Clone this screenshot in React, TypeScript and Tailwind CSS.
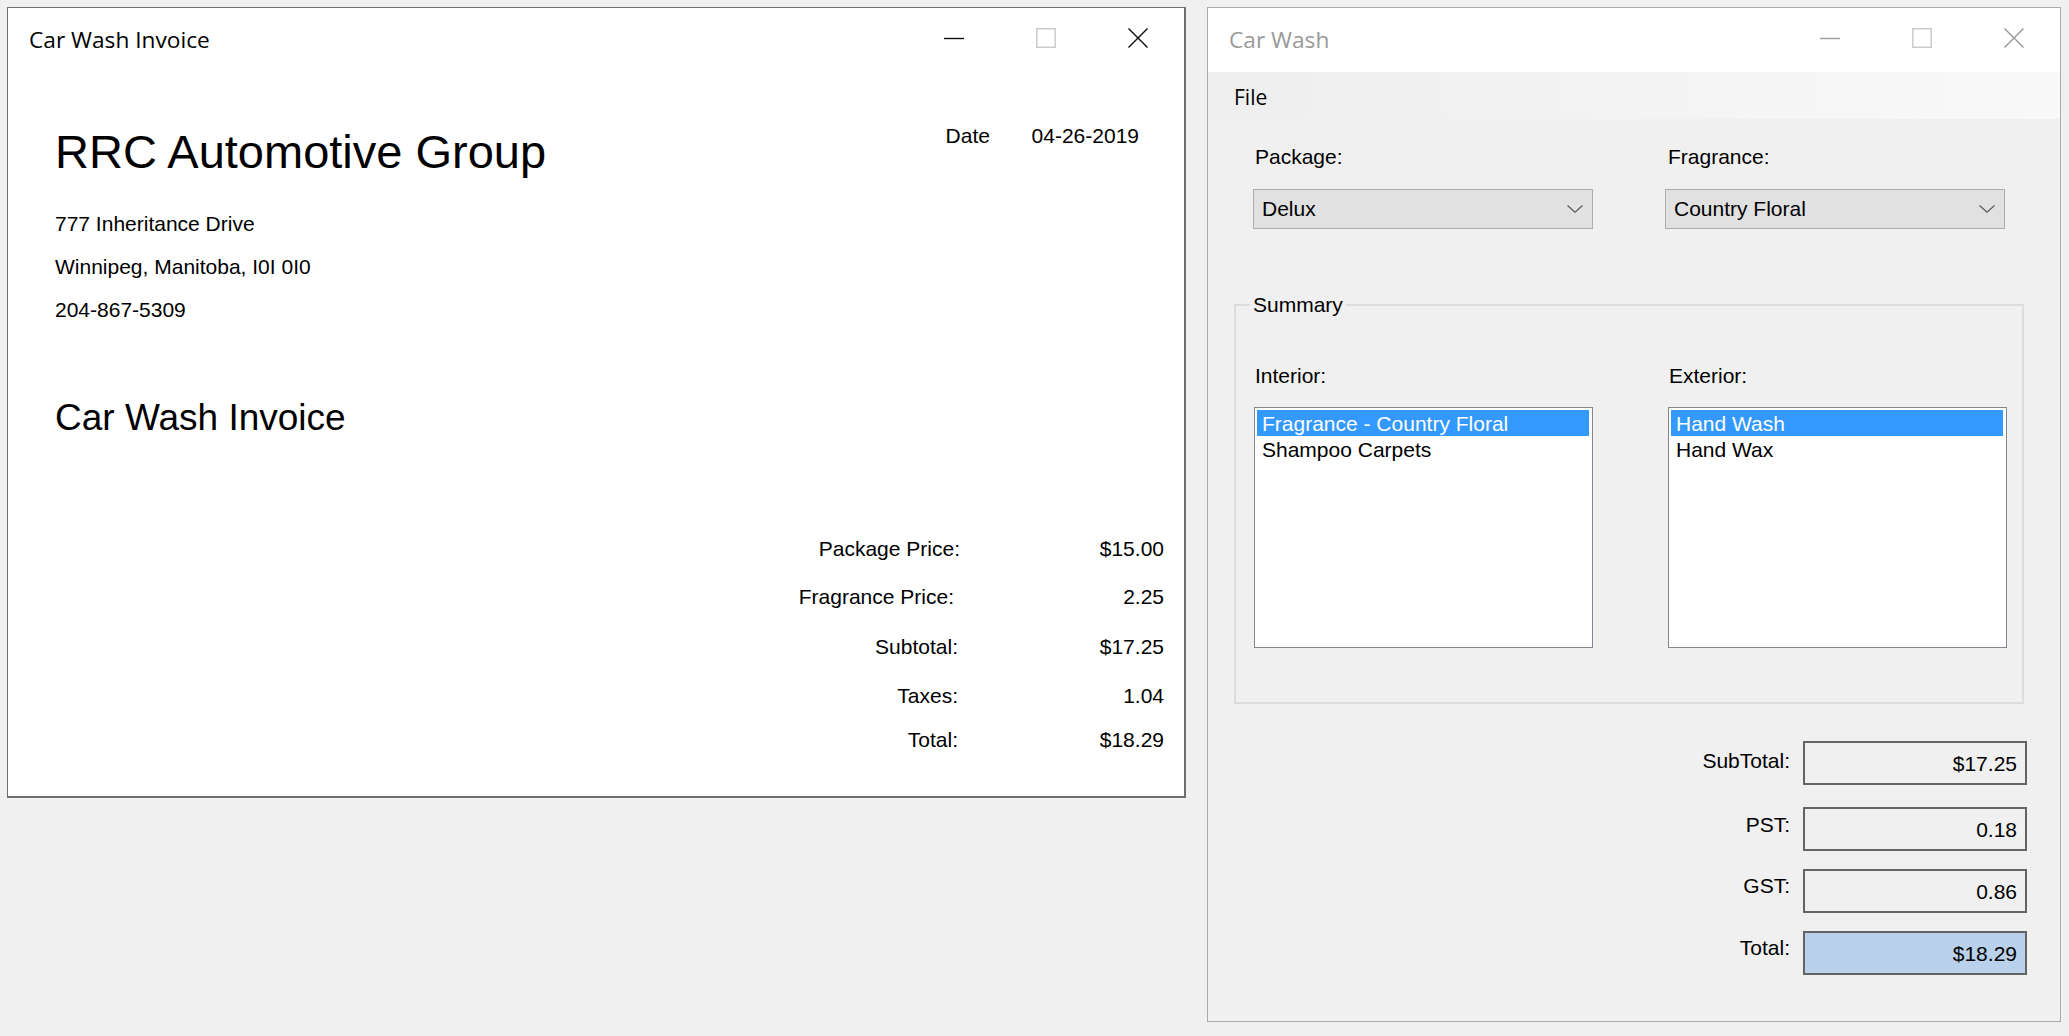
import React from "react";

function CaptionButtons({ active }: { active: boolean }) {
  const c = active ? "#111111" : "#9a9a9a";
  return (
    <div className="flex h-full">
      <div className="w-[92px] flex justify-center pt-[20px]">
        <svg width="20" height="20" viewBox="0 0 20 20">
          <line x1="0" y1="10.5" x2="20" y2="10.5" stroke={c} strokeWidth="1.4" />
        </svg>
      </div>
      <div className="w-[92px] flex justify-center pt-[20px]">
        <svg width="20" height="20" viewBox="0 0 20 20">
          <rect x="0.75" y="0.75" width="18.5" height="18.5" fill="none" stroke="#cccccc" strokeWidth="1.5" />
        </svg>
      </div>
      <div className="w-[92px] flex justify-center pt-[20px]">
        <svg width="20" height="20" viewBox="0 0 20 20">
          <line x1="0.5" y1="0.5" x2="19.5" y2="19.5" stroke={c} strokeWidth="1.4" />
          <line x1="19.5" y1="0.5" x2="0.5" y2="19.5" stroke={c} strokeWidth="1.4" />
        </svg>
      </div>
    </div>
  );
}

function TitleBar({ title, active }: { title: string; active: boolean }) {
  return (
    <div className="h-[64px] bg-white flex justify-between shrink-0">
      <div
        className={
          "pl-[21px] pt-[17px] text-[22.7px] leading-[30px] font-['Open_Sans',sans-serif] " +
          (active ? "text-black" : "text-[#999999]")
        }
      >
        {title}
      </div>
      <CaptionButtons active={active} />
    </div>
  );
}

function Chevron() {
  return (
    <svg width="16" height="8" viewBox="0 0 16 8">
      <path d="M0.5 0.5 L8 7.2 L15.5 0.5" fill="none" stroke="#5a5a5a" strokeWidth="1.2" />
    </svg>
  );
}

function Combo({ value }: { value: string }) {
  return (
    <div className="w-[340px] h-[40px] border border-[#adadad] bg-[#e1e1e1] flex items-center justify-between pl-[8px] pr-[9px]">
      <span className="leading-[26px]">{value}</span>
      <Chevron />
    </div>
  );
}

function ListBox({ items }: { items: string[] }) {
  return (
    <div className="w-[339px] h-[241px] border border-[#828790] bg-white pt-[2px] pl-[2px] pr-[3px]">
      {items.map((it, i) => (
        <div
          key={it}
          className={
            "h-[25px] leading-[27px] pl-[5px] whitespace-nowrap " +
            (i === 0 ? "bg-[#3399ff] text-white h-[26px]" : "text-black")
          }
        >
          {it}
        </div>
      ))}
    </div>
  );
}

const priceRows = [
  { label: "Package Price:", value: "$15.00", h: "h-[48px]", lm: "mr-[-2px]" },
  { label: "Fragrance Price:", value: "2.25", h: "h-[50px]", lm: "mr-[4px]" },
  { label: "Subtotal:", value: "$17.25", h: "h-[49px]", lm: "mr-0" },
  { label: "Taxes:", value: "1.04", h: "h-[44px]", lm: "mr-0" },
  { label: "Total:", value: "$18.29", h: "h-[26px]", lm: "mr-0" },
];

const totals = [
  { label: "SubTotal:", value: "$17.25", mt: "mt-0", lp: "pt-[7px]", bg: "bg-[#f0f0f0]" },
  { label: "PST:", value: "0.18", mt: "mt-[22px]", lp: "pt-[5px]", bg: "bg-[#f0f0f0]" },
  { label: "GST:", value: "0.86", mt: "mt-[18px]", lp: "pt-[4px]", bg: "bg-[#f0f0f0]" },
  { label: "Total:", value: "$18.29", mt: "mt-[18px]", lp: "pt-[4px]", bg: "bg-[#b9d1ea]" },
];

export default function App() {
  return (
    <div className="w-[2069px] h-[1036px] bg-[#f0f0f0] overflow-hidden flex items-start gap-[21px] pl-[7px] pt-[7px] font-['Liberation_Sans',Arial,sans-serif] text-black">
      {/* Invoice window */}
      <div className="w-[1179px] h-[791px] bg-white border-l border-t border-r-2 border-b-2 border-[#6f6f6f] flex flex-col shrink-0">
        <TitleBar title="Car Wash Invoice" active={true} />
        <div className="flex flex-col pl-[47px]">
          <div className="mt-[51px] flex justify-between items-start pr-[45px]">
            <div className="text-[47px] leading-[58px]">RRC Automotive Group</div>
            <div className="flex text-[21px] leading-[26px]">
              <span className="w-[86px]">Date</span>
              <span>04-26-2019</span>
            </div>
          </div>
          <div className="mt-[21px] text-[21px] leading-[43px]">
            <div>777 Inheritance Drive</div>
            <div>Winnipeg, Manitoba, I0I 0I0</div>
            <div>204-867-5309</div>
          </div>
          <div className="mt-[65px] text-[37px] leading-[44px]">Car Wash Invoice</div>
          <div className="mt-[96px] flex flex-col text-[21px] leading-[26px] pr-[20px]">
            {priceRows.map((r) => (
              <div key={r.label} className={"flex justify-end items-start " + r.h}>
                <span className={"text-right " + r.lm}>{r.label}</span>
                <span className="w-[206px] text-right">{r.value}</span>
              </div>
            ))}
          </div>
        </div>
      </div>

      {/* Car Wash form window */}
      <div className="w-[854px] h-[1015px] bg-[#f0f0f0] border border-[#aaaaaa] flex flex-col shrink-0">
        <TitleBar title="Car Wash" active={false} />
        <div className="h-[47px] shrink-0 bg-gradient-to-r from-[#eeeeee] to-[#f9f9f9] pl-[26px] pt-[12px] text-[21px] leading-[26px] font-['Open_Sans',sans-serif]">
          File
        </div>
        <div className="flex flex-col text-[21px] leading-[26px]">
          <div className="mt-[25px] flex pl-[45px] gap-[72px]">
            <div className="flex flex-col">
              <span className="ml-[2px]">Package:</span>
              <div className="mt-[19px]">
                <Combo value="Delux" />
              </div>
            </div>
            <div className="flex flex-col">
              <span className="ml-[3px]">Fragrance:</span>
              <div className="mt-[19px]">
                <Combo value="Country Floral" />
              </div>
            </div>
          </div>

          <div className="relative mt-[75px] ml-[26px] w-[790px] h-[400px] border-2 border-[#dcdcdc] pt-[57px] pl-[18px]">
            <span className="absolute left-[14px] top-[-14px] bg-[#f0f0f0] px-[3px]">Summary</span>
            <div className="flex gap-[75px]">
              <div className="flex flex-col">
                <span className="ml-[1px]">Interior:</span>
                <div className="mt-[18px]">
                  <ListBox items={["Fragrance - Country Floral", "Shampoo Carpets"]} />
                </div>
              </div>
              <div className="flex flex-col">
                <span className="ml-[1px]">Exterior:</span>
                <div className="mt-[18px]">
                  <ListBox items={["Hand Wash", "Hand Wax"]} />
                </div>
              </div>
            </div>
          </div>

          <div className="mt-[37px] flex flex-col items-end pr-[33px]">
            {totals.map((t) => (
              <div key={t.label} className={"flex items-start gap-[13px] " + t.mt}>
                <span className={t.lp}>{t.label}</span>
                <div
                  className={
                    "w-[224px] h-[44px] border-2 border-[#646464] pt-[8px] pr-[8px] text-right " + t.bg
                  }
                >
                  {t.value}
                </div>
              </div>
            ))}
          </div>
        </div>
      </div>
    </div>
  );
}
